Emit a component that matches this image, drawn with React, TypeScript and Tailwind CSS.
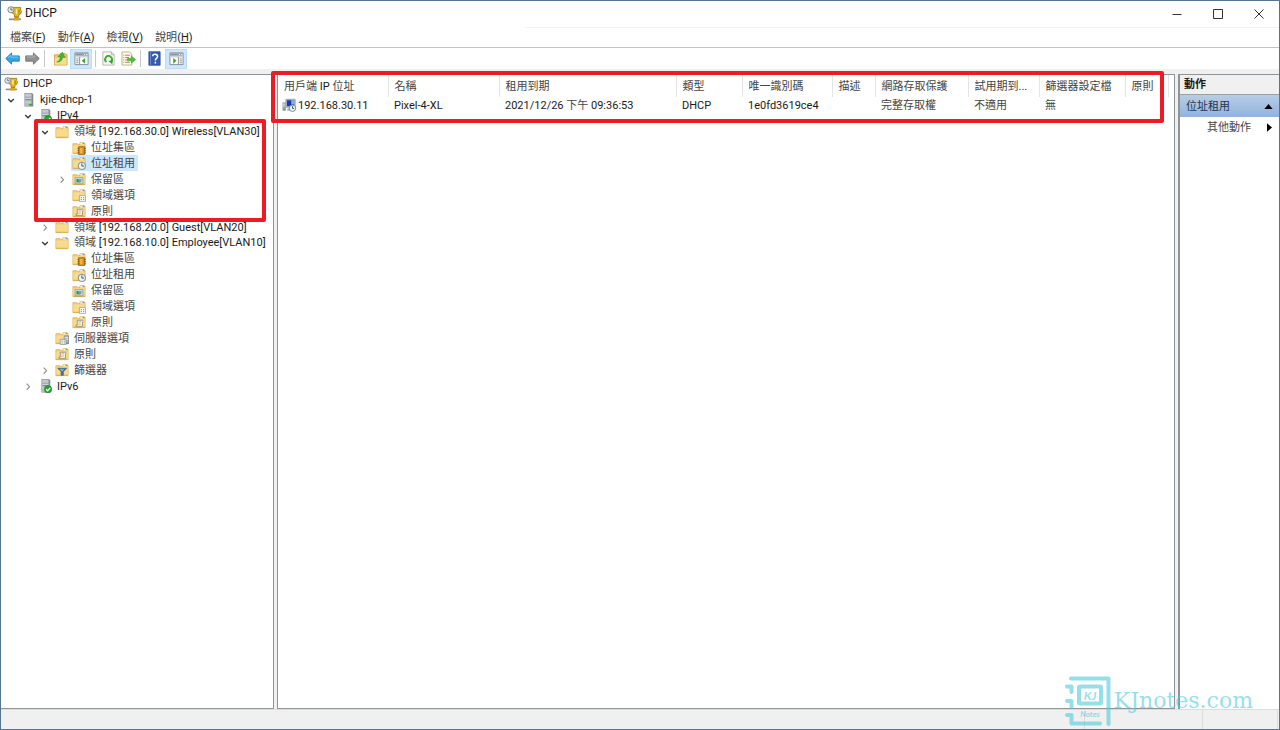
import type { ReactNode } from "react";

type IconName =
  | "dhcp"
  | "server"
  | "serverOk"
  | "folder"
  | "pool"
  | "lease"
  | "reservation"
  | "scopeOptions"
  | "policy"
  | "serverOptions"
  | "filter";

type Node = {
  level: 0 | 1 | 2 | 3 | 4;
  icon: IconName;
  label: string;
  state?: "open" | "closed";
  selected?: boolean;
};

const tree: Node[] = [
  { level: 0, icon: "dhcp", label: "DHCP" },
  { level: 1, icon: "server", label: "kjie-dhcp-1", state: "open" },
  { level: 2, icon: "serverOk", label: "IPv4", state: "open" },
  { level: 3, icon: "folder", label: "領域 [192.168.30.0] Wireless[VLAN30]", state: "open" },
  { level: 4, icon: "pool", label: "位址集區" },
  { level: 4, icon: "lease", label: "位址租用", selected: true },
  { level: 4, icon: "reservation", label: "保留區", state: "closed" },
  { level: 4, icon: "scopeOptions", label: "領域選項" },
  { level: 4, icon: "policy", label: "原則" },
  { level: 3, icon: "folder", label: "領域 [192.168.20.0] Guest[VLAN20]", state: "closed" },
  { level: 3, icon: "folder", label: "領域 [192.168.10.0] Employee[VLAN10]", state: "open" },
  { level: 4, icon: "pool", label: "位址集區" },
  { level: 4, icon: "lease", label: "位址租用" },
  { level: 4, icon: "reservation", label: "保留區" },
  { level: 4, icon: "scopeOptions", label: "領域選項" },
  { level: 4, icon: "policy", label: "原則" },
  { level: 3, icon: "serverOptions", label: "伺服器選項" },
  { level: 3, icon: "policy", label: "原則" },
  { level: 3, icon: "filter", label: "篩選器", state: "closed" },
  { level: 2, icon: "serverOk", label: "IPv6", state: "closed" },
];

const indent = ["pl-[2px]", "pl-px", "pl-[18px]", "pl-[35px]", "pl-[52px]"];

const columns = [
  { title: "用戶端 IP 位址", value: "192.168.30.11", width: "w-[110px]" },
  { title: "名稱", value: "Pixel-4-XL", width: "w-[111px]" },
  { title: "租用到期", value: "2021/12/26 下午 09:36:53", width: "w-[177px]" },
  { title: "類型", value: "DHCP", width: "w-[66px]" },
  { title: "唯一識別碼", value: "1e0fd3619ce4", width: "w-[90px]" },
  { title: "描述", value: "", width: "w-[43px]" },
  { title: "網路存取保護", value: "完整存取權", width: "w-[93px]" },
  { title: "試用期到...", value: "不適用", width: "w-[71px]" },
  { title: "篩選器設定檔", value: "無", width: "w-[86px]" },
  { title: "原則", value: "", width: "w-[43px]" },
];

const menus = [
  { label: "檔案", key: "F" },
  { label: "動作", key: "A" },
  { label: "檢視", key: "V" },
  { label: "說明", key: "H" },
];

/* Chinese runs are drawn in a softer grey than Latin runs. */
function Label({ text }: { text: string }) {
  return (
    <span className="whitespace-pre">
      {text.split(/([\u4e00-\u9fff]+)/).map((run, i) =>
        i % 2 ? (
          <span key={i} className="text-[#444444]">
            {run}
          </span>
        ) : (
          run
        ),
      )}
    </span>
  );
}

function FolderShape() {
  return (
    <>
      <path d="M1 3h5l1 1h2V2h5l1 1V14.500H1z" fill="#f0cc76" stroke="#d9ae52" strokeWidth=".8" />
      <path d="M1.500 5h13v9h-13z" fill="#f8db8d" />
      <path d="M9.500 2.500h4v1.300h-4z" fill="#fff" />
      <path d="M12 2h2v1.400h-2z" fill="#5a9fdc" />
      <path d="M1.500 14h13" stroke="#d6a94c" />
    </>
  );
}

function ServerShape() {
  return (
    <>
      <path d="M4 0h8l2 1v14.500H4z" fill="#7f888f" />
      <path d="M4.500 .5H12v14.500H4.500z" fill="#b4bcc2" />
      <path d="M5 3.500h7M5 5.500h7M5 7.500h7" stroke="#646e76" />
      <path d="M5 2.500h7M5 4.500h7M5 6.500h7" stroke="#e3e8eb" />
      <path d="M5 10.500h7" stroke="#d5dadd" />
    </>
  );
}

function DhcpShape() {
  return (
    <>
      <path d="M6 1.500h8.500v3l1 1-1 3-2 1V12H8V9L6 8z" fill="#e8bb1a" stroke="#8f6b10" strokeWidth=".8" />
      <path d="M9.500 3.500h1.500v5H9.500z" fill="#fff0a0" />
      <path d="M12 4h1.500v4H12z" fill="#b88616" />
      <circle cx="4.200" cy="4" r="3.300" fill="#e4e8eb" stroke="#77828a" />
      <path d="M4.200 2v2.200h2" fill="none" stroke="#4d5860" strokeWidth=".9" />
      <path d="M8.500 11h3v2.500h-3z" fill="#b18a20" />
      <path d="M2 14.200h13" stroke="#848d93" strokeWidth="1.800" />
      <path d="M7 12.600h6v2.800H7z" fill="#d6a51c" />
    </>
  );
}

function TreeIcon({ name }: { name: IconName }) {
  const body: Record<IconName, ReactNode> = {
    dhcp: <DhcpShape />,
    server: (
      <>
        <ServerShape />
        <path d="M9 13.500h3.500" stroke="#35b52c" strokeWidth="2" />
      </>
    ),
    serverOk: (
      <>
        <ServerShape />
        <circle cx="11.500" cy="11.700" r="4.200" fill="#25a52b" stroke="#11841b" strokeWidth=".6" />
        <path d="m9.300 11.800 1.700 1.700 3-3.400" fill="none" stroke="#fff" strokeWidth="1.500" />
      </>
    ),
    folder: <FolderShape />,
    pool: (
      <>
        <FolderShape />
        <path d="M7.500 6.500h7v9h-7z" fill="#d9921b" stroke="#996014" strokeWidth=".9" />
        <path d="M6.300 8.500h2M6.300 11h2M6.300 13.500h2M13.800 8.500h2M13.800 11h2M13.800 13.500h2" stroke="#80520f" />
        <path d="M9.300 8h2.500v6H9.300z" fill="#f2b84b" />
      </>
    ),
    lease: (
      <>
        <FolderShape />
        <circle cx="11.300" cy="11.300" r="4.200" fill="#eef3f7" stroke="#6f7e8b" />
        <path d="M11.300 8.500v3h2.500" fill="none" stroke="#2c4257" />
      </>
    ),
    reservation: (
      <>
        <FolderShape />
        <path d="M3.500 6.500h9v7h-9z" fill="#dbe5ec" stroke="#7b8791" strokeWidth=".8" />
        <path d="M5 8h5v4H5z" fill="#31985a" />
        <path d="M7.500 8H11v3H7.500z" fill="#7f9cc4" />
      </>
    ),
    scopeOptions: (
      <>
        <FolderShape />
        <path d="M8.500 8.500h7v7h-7z" fill="#fafafa" stroke="#929aa1" strokeWidth=".8" />
        <path d="M10 11h1.400M12.600 11H14M10 13.300h1.400M12.600 13.300H14" stroke="#6d7880" />
      </>
    ),
    policy: (
      <>
        <FolderShape />
        <path d="M6 6h6v7H4.500v-1.500H6z" fill="#fff4d4" stroke="#8c8171" strokeWidth=".9" />
        <path d="m7.500 8 3-.2M7 10.500l3-.2" stroke="#91989d" strokeWidth=".8" />
        <path d="M11 6.300c2-.8 2.800 1.200.8 1.700" fill="#fff" stroke="#8c8171" strokeWidth=".7" />
      </>
    ),
    serverOptions: (
      <>
        <FolderShape />
        <path d="M10.500 5.500h5V14.500h-5z" fill="#aeb7bd" stroke="#737c84" strokeWidth=".7" />
        <path d="M11 7.500h4M11 9.500h4" stroke="#edf2f4" />
        <path d="M6 9.500h6.500v6H6z" fill="#fafafa" stroke="#808990" strokeWidth=".8" />
        <path d="M7.500 11.500h1.200M10 11.500h1.200M7.500 13.700h1.200M10 13.700h1.200" stroke="#59646c" />
        <path d="M13 13.800h2.300" stroke="#29ad37" />
      </>
    ),
    filter: (
      <>
        <FolderShape />
        <path d="M3 6h10.500L9.600 10v4H6.900v-4z" fill="#3d73a8" stroke="#305d88" strokeWidth=".6" />
        <path d="M5 7h5.500L8.200 9.300z" fill="#8fbbe0" />
      </>
    ),
  };
  return (
    <svg viewBox="0 0 16 16" className="size-[14px] shrink-0" aria-hidden="true">
      {body[name]}
    </svg>
  );
}

function Chevron({ open }: { open: boolean }) {
  return (
    <svg viewBox="0 0 8 8" className="size-2" aria-hidden="true">
      {open ? (
        <path d="m1.200 3 2.800 2.700L6.800 3" fill="none" stroke="#3a3a3a" strokeWidth="1.400" />
      ) : (
        <path d="M2.700 1.700 5.500 4.700 2.700 7.700" fill="none" stroke="#949494" strokeWidth="1.200" />
      )}
    </svg>
  );
}

function ToolButton({ label, active, children }: { label: string; active?: boolean; children: ReactNode }) {
  return (
    <button
      type="button"
      aria-label={label}
      className={
        active
          ? "flex h-5 w-[22px] items-center justify-center border border-[#b9ddfa] bg-[#cce8ff]"
          : "flex h-5 w-5 items-center justify-center"
      }
    >
      <svg viewBox="0 0 16 16" className="size-[15px]" aria-hidden="true">
        {children}
      </svg>
    </button>
  );
}

function Divider() {
  return <span className="mx-[2px] h-[17px] w-px bg-[#c9c9c9]" />;
}

function ConsoleShape({ right }: { right?: boolean }) {
  return (
    <>
      <path d="M1 2h14v12.500H1z" fill="#fff" stroke="#858c92" />
      <path d="M1.500 2.500h13v2.500h-13z" fill="#8b949b" />
      <path d="M2 6.200h12" stroke="#b5bcc2" />
      <path d="M10.500 3.800h1.400M13 3.800h1.200" stroke="#fff" />
      {right ? (
        <>
          <path d="M10 6.500v8" stroke="#858c92" />
          <path d="M11.300 8.500h2.500M11.300 10.500h2.500M11.300 12.500h2.500" stroke="#858c92" />
          <path d="M4.500 7.500v6L8 10.500z" fill="#38a52e" />
        </>
      ) : (
        <>
          <path d="M6 6.500v8" stroke="#858c92" />
          <path d="M2.300 8.500h2.500M2.300 10.500h2.500M2.300 12.500h2.500" stroke="#858c92" />
          <path d="M11.800 7.500v6l-3.500-3z" fill="#38a52e" />
        </>
      )}
    </>
  );
}

function TitleBar() {
  return (
    <header className="flex h-[25px] shrink-0 items-center bg-white pl-[6px]">
      <svg viewBox="0 0 16 16" className="size-[15px]" aria-hidden="true">
        <DhcpShape />
      </svg>
      <h1 className="ml-[3px] flex-1 text-[12px]">DHCP</h1>
      <button type="button" aria-label="最小化" className="flex h-full w-[41px] items-center justify-center">
        <svg viewBox="0 0 12 12" className="size-3"><path d="M1.500 6.500h9" stroke="#333" /></svg>
      </button>
      <button type="button" aria-label="最大化" className="flex h-full w-[41px] items-center justify-center">
        <svg viewBox="0 0 12 12" className="size-3"><path d="M1.500 1.500h9v9h-9z" fill="none" stroke="#333" /></svg>
      </button>
      <button type="button" aria-label="關閉" className="flex h-full w-[41px] items-center justify-center">
        <svg viewBox="0 0 12 12" className="size-3"><path d="m1.500 1.500 9 9m0-9-9 9" stroke="#333" /></svg>
      </button>
    </header>
  );
}

function Toolbar() {
  return (
    <div role="toolbar" aria-label="工具列" className="flex h-[22px] shrink-0 items-center border-t border-[#c3c3c3] bg-white pl-px">
      <ToolButton label="上一頁">
        <path d="M.8 8 7 2v3.200h8.200v5.600H7V14z" fill="#35a5e8" stroke="#1778bc" strokeWidth=".9" />
        <path d="M3 7.400 6.200 4.500v2h8" fill="none" stroke="#8cd4fb" strokeWidth=".8" />
      </ToolButton>
      <ToolButton label="下一頁">
        <path d="M15.200 8 9 2v3.200H.8v5.600H9V14z" fill="#929292" stroke="#696969" strokeWidth=".9" />
        <path d="M1.800 6.400h8v-2" fill="none" stroke="#c4c4c4" strokeWidth=".8" />
      </ToolButton>
      <Divider />
      <span className="w-[3px]" />
      <ToolButton label="上移一層">
        <path d="M1.500 4h5l1.200-1.500H12L15 4v11H1.500z" fill="#edca70" stroke="#c99d3e" strokeWidth=".8" />
        <path d="M2 7.500h12.500v7H2z" fill="#f7dc92" />
        <path d="M4 11.800c2.300-.8 3.500-2.600 3.800-5.300L5.300 6 10 1.300 13 7l-2.700-.3c-.5 3.300-2.500 5.500-6.300 5.100z" fill="#48b434" stroke="#288d20" strokeWidth=".5" />
      </ToolButton>
      <ToolButton label="顯示主控台樹狀目錄" active>
        <ConsoleShape />
      </ToolButton>
      <span className="w-px" />
      <Divider />
      <ToolButton label="重新整理">
        <path d="M2 1h9.200L14 3.800V15H2z" fill="#fbfbfb" stroke="#a5a08e" strokeWidth=".8" />
        <path d="M11 1v3h3" fill="none" stroke="#a5a08e" strokeWidth=".8" />
        <path d="M5.800 11.800A3.600 3.600 0 1 1 11 11" fill="none" stroke="#3caf31" strokeWidth="2" />
        <path d="m8 10.800 4.800-1.400-.8 4.600z" fill="#35a02b" />
      </ToolButton>
      <ToolButton label="匯出清單">
        <path d="M1 1h8.200l2.300 2.300V15H1z" fill="#fff9df" stroke="#aaa07d" strokeWidth=".8" />
        <path d="M2.500 4.500h1M4.500 4.500h5M2.500 7h1M4.500 7h4M2.500 9.500h1M4.500 9.500h3M2.500 12h1M4.500 12h5" stroke="#837d69" strokeWidth=".9" />
        <path d="M7 7.800h4V5.200L15.700 9.200 11 13v-2.600H7z" fill="#50bd3b" stroke="#369c29" strokeWidth=".5" />
      </ToolButton>
      <Divider />
      <span className="w-px" />
      <ToolButton label="說明">
        <path d="M2 .8h12v14.400H2z" fill="#335cb2" stroke="#254792" strokeWidth=".8" />
        <path d="M3.800 1v14" stroke="#7c9bdc" strokeWidth=".8" />
        <path d="M6 5.600c0-3 5.300-3 5.300.2 0 2-2.400 2.200-2.400 4.300M8.900 11.500v1.700" fill="none" stroke="#fff" strokeWidth="1.600" />
      </ToolButton>
      <span className="w-px" />
      <ToolButton label="顯示動作窗格" active>
        <ConsoleShape right />
      </ToolButton>
    </div>
  );
}

function TreePane() {
  return (
    <nav aria-label="主控台樹狀目錄" className="relative w-[273px] shrink-0 border-t border-r border-b border-[#8e9499] bg-white">
      <ul role="tree" className="grid h-[319px] auto-rows-fr pt-px">
        {tree.map((node, i) => (
          <li
            key={i}
            role="treeitem"
            aria-level={node.level + 1}
            aria-selected={!!node.selected}
            className={`flex min-h-0 items-center ${indent[node.level]}`}
          >
            {node.level > 0 && (
              <span className="flex w-[18px] shrink-0 justify-center">
                {node.state && (
                  <button type="button" aria-label={node.state === "open" ? "摺疊" : "展開"} className="flex">
                    <Chevron open={node.state === "open"} />
                  </button>
                )}
              </span>
            )}
            <button
              type="button"
              className={`flex h-full items-center gap-[5px] pr-[3px] pl-px whitespace-nowrap ${node.selected ? "bg-[#cce8ff]" : ""}`}
            >
              <TreeIcon name={node.icon} />
              <Label text={node.label} />
            </button>
          </li>
        ))}
      </ul>
      <div className="pointer-events-none absolute top-[44px] left-[33px] h-[103px] w-[232px] rounded-xs border-4 border-[#ed1c24]" />
    </nav>
  );
}

function LeaseTable() {
  return (
    <main className="relative min-w-0 flex-1 border border-[#8e9499] bg-white">
      <table className="table-fixed border-collapse text-left">
        <colgroup>
          {columns.map((c) => (
            <col key={c.title} className={c.width} />
          ))}
        </colgroup>
        <thead>
          <tr className="h-[22px]">
            {columns.map((c) => (
              <th key={c.title} scope="col" className="border-r border-[#e5e5e5] p-0 pl-[6px] font-normal whitespace-nowrap">
                <Label text={c.title} />
              </th>
            ))}
          </tr>
        </thead>
        <tbody>
          <tr className="h-4">
            {columns.map((c, i) => (
              <td key={c.title} className={i === 0 ? "p-0 pl-1 whitespace-nowrap" : "p-0 pl-[6px] whitespace-nowrap"}>
                {i === 0 ? (
                  <span className="flex items-center gap-[2px]">
                    <svg viewBox="0 0 16 16" className="size-[14px]" aria-hidden="true">
                      <path d="M.5 5h4v9.500h-4z" fill="#9ba4aa" />
                      <path d="M1 7h3M1 9h3" stroke="#e6eaec" />
                      <path d="M4.500 1.500h10.500v9h-10.500z" fill="#dfe4e8" stroke="#8b949b" />
                      <path d="M5.500 2.500h8.500v7h-8.500z" fill="#143bb5" />
                      <path d="M10.500 2.500H14v5h-3.500z" fill="#7fb0ec" />
                      <path d="M6 12h5v2.500H6z" fill="#a2abb1" />
                      <path d="M1.500 13.500h2" stroke="#35a52e" />
                      <circle cx="12" cy="11.700" r="3.700" fill="#eef3f7" stroke="#6f7e8b" />
                      <path d="M12 9.400v2.500h1.900" fill="none" stroke="#2c4257" />
                    </svg>
                    {c.value}
                  </span>
                ) : (
                  <Label text={c.value} />
                )}
              </td>
            ))}
          </tr>
        </tbody>
      </table>
      <div className="pointer-events-none absolute -top-[4px] -left-[7px] h-[52px] w-[893px] rounded-xs border-4 border-[#ed1c24]" />
    </main>
  );
}

function ActionPane() {
  return (
    <aside aria-label="動作" className="w-[101px] shrink-0 border-t border-l-2 border-[#8e9499] bg-white">
      <h2 className="h-5 border-b border-[#a0a0a0] bg-[#f0f0f0] pl-1 leading-5 font-bold">動作</h2>
      <button type="button" className="flex h-[22px] w-full items-center justify-between bg-linear-to-b from-[#b7cde6] to-[#91b3db] px-[6px] text-[#1e3450]">
        位址租用
        <svg viewBox="0 0 10 6" className="h-[5px] w-[9px]" aria-hidden="true"><path d="M0 6 5 0l5 6z" fill="#000" /></svg>
      </button>
      <button type="button" className="flex h-[21px] w-full items-center justify-between pr-[7px] pl-[27px]">
        <Label text="其他動作" />
        <svg viewBox="0 0 6 10" className="h-[9px] w-[5px]" aria-hidden="true"><path d="m0 0 6 5-6 5z" fill="#000" /></svg>
      </button>
    </aside>
  );
}

function Watermark() {
  return (
    <div className="pointer-events-none absolute right-[26px] bottom-[3px] flex items-center gap-[3px] text-[#4fcbdd] opacity-60">
      <svg viewBox="0 0 46 50" className="h-[50px] w-[46px]" aria-hidden="true">
        <path d="M6 2.500h37.500V48" fill="none" stroke="currentColor" strokeWidth="4" strokeLinecap="round" strokeLinejoin="round" />
        <path d="M2 10.500h4.500V16M2 25h4.500v6M2 39h4.500v8.500H35" fill="none" stroke="currentColor" strokeWidth="4" strokeLinecap="round" strokeLinejoin="round" />
        <rect x="14" y="10.500" width="22" height="17" rx="1" fill="none" stroke="currentColor" strokeWidth="4" />
        <text x="25" y="23.500" textAnchor="middle" fontSize="12" fontStyle="italic" fontWeight="700" fill="currentColor" fontFamily="Lato, sans-serif">KJ</text>
        <text x="25" y="40.500" textAnchor="middle" fontSize="8" fontStyle="italic" fontWeight="700" fill="currentColor" fontFamily="Lato, sans-serif">Notes</text>
      </svg>
      <span className="font-['DejaVu_Serif',serif] text-[22px] leading-none">KJnotes.com</span>
    </div>
  );
}

export default function App() {
  return (
    <div className="relative flex h-screen flex-col overflow-hidden border border-[#54748f] bg-[#f0f0f0] font-[Roboto,'Noto_Sans_CJK_TC',sans-serif] text-[11px] leading-[15px] text-[#1a1a1a]">
      <TitleBar />
      <div role="menubar" className="flex h-[21px] shrink-0 items-center gap-3 bg-white pt-px pl-[9px]">
        {menus.map((m) => (
          <button key={m.key} type="button" role="menuitem" className="whitespace-nowrap">
            <Label text={m.label} />(<span className="underline">{m.key}</span>)
          </button>
        ))}
        <span className="ml-[320px] h-px flex-1 self-start bg-[#f3f3f3]" />
      </div>
      <Toolbar />
      <div className="mt-[5px] flex min-h-0 flex-1">
        <TreePane />
        <div className="w-[3px] shrink-0" />
        <LeaseTable />
        <div className="w-[3px] shrink-0" />
        <ActionPane />
      </div>
      <footer className="flex h-5 shrink-0 justify-end border-t border-[#dcdcdc] pr-px">
        <span className="w-[118px] border-l border-[#dcdcdc]" />
        <span className="w-[76px] border-x border-[#dcdcdc]" />
      </footer>
      <Watermark />
    </div>
  );
}
